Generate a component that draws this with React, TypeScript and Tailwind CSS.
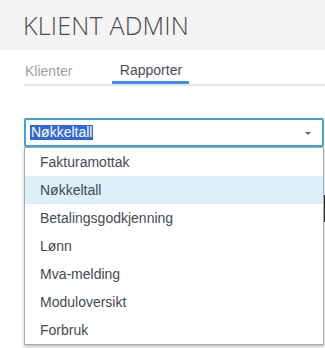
import { useState } from 'react';

const options = [
  'Fakturamottak',
  'Nøkkeltall',
  'Betalingsgodkjenning',
  'Lønn',
  'Mva-melding',
  'Moduloversikt',
  'Forbruk',
];

export default function App() {
  const [selected, setSelected] = useState('Nøkkeltall');
  const [tab, setTab] = useState('Rapporter');

  return (
    <div className="h-[348px] w-[325px] overflow-hidden bg-white font-['Liberation_Sans',Arial,sans-serif]">
      <header className="flex h-[50px] items-center bg-[#f4f4f4] pl-[23px]">
        <h1 className="font-['Open_Sans',sans-serif] text-[25px] font-light leading-none tracking-[0.2px] text-[#4a4a4a] antialiased">
          KLIENT ADMIN
        </h1>
      </header>

      <div className="pl-6">
        <nav className="flex h-[36px] items-end border-b-2 border-[#e8e8e8] text-[14px]">
          <button
            onClick={() => setTab('Klienter')}
            className={`mr-[40px] h-[33px] pl-px pt-[8px] text-left ${tab === 'Klienter' ? 'border-b-[3px] border-[#3d8ef2] text-[#444]' : 'text-[#9aa0a8]'}`}
          >
            Klienter
          </button>
          <button
            onClick={() => setTab('Rapporter')}
            className={`h-[33px] w-[77px] pt-[8px] text-center ${tab === 'Rapporter' ? 'border-b-[3px] border-[#3d8ef2] text-[#4a4f57]' : 'text-[#9aa0a8]'}`}
          >
            Rapporter
          </button>
        </nav>

        <div className="relative mt-[32px]">
          <div className="flex h-[29px] w-[300px] items-center justify-between rounded-[2px] border-2 border-[#45a2d6] pl-[4px] pr-[11px] text-[14px]">
            <span className="bg-[#3367d6] px-px leading-[15px] text-white">{selected}</span>
            <svg width="6" height="3" viewBox="0 0 6 3" className="mt-[2px]">
              <path d="M0 0h6L3 3z" fill="#666" />
            </svg>
          </div>

          <div className="mt-[10px] flex h-[200px] gap-2">
            <div className="flex-1 pt-[190px] pl-[16px] text-[14px] font-bold text-[#2a6ebb]">IKLOV</div>
            <div className="mt-[38px] h-[27px] w-[20px] bg-[#333]" />
          </div>

          <ul className="absolute left-0 top-[29px] z-10 w-[300px] border border-[#a9a9a9] bg-white text-[14px] text-[#454a52] shadow-[0_2px_3px_rgba(0,0,0,0.25)]">
            {options.map((o) => (
              <li
                key={o}
                onClick={() => setSelected(o)}
                className={`flex h-[28px] cursor-pointer items-center pl-[15px] ${o === selected ? 'bg-[#dcf0fb]' : ''}`}
              >
                {o}
              </li>
            ))}
          </ul>
        </div>
      </div>
    </div>
  );
}
